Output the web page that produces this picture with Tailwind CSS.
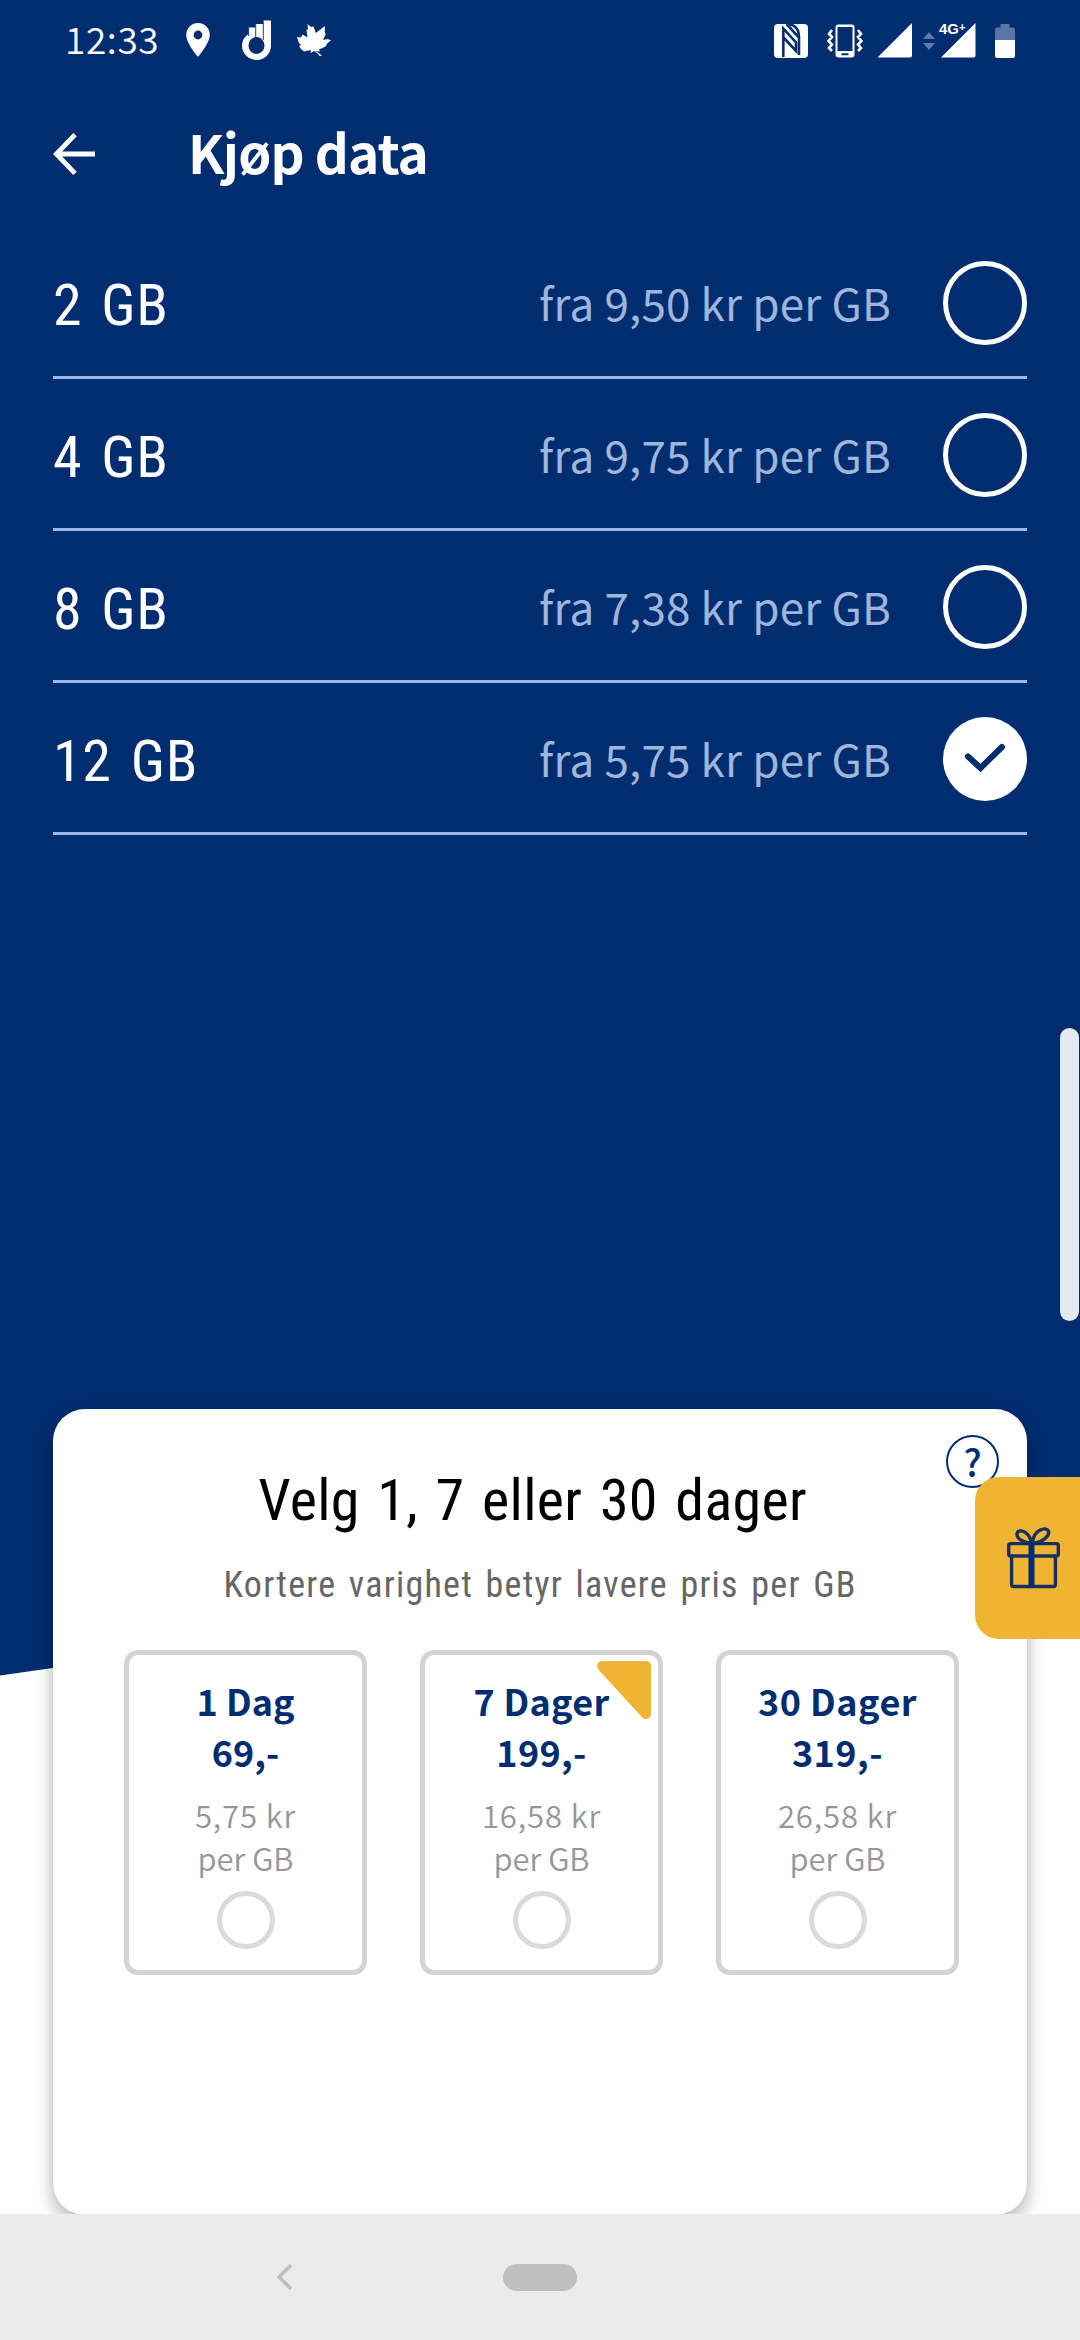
<!DOCTYPE html>
<html lang="nb">
<head>
<meta charset="utf-8">
<meta name="viewport" content="width=device-width, initial-scale=1">
<title>Kjøp data</title>
<script src="https://cdn.jsdelivr.net/npm/@tailwindcss/browser@4"></script>
</head>
<body class="bg-white">
<div class="relative flex flex-col w-[1080px] h-[2340px] overflow-hidden bg-white font-['Noto_Sans_CJK_SC','Noto_Sans',sans-serif]">
  <!-- slanted blue backdrop -->
  <svg class="absolute inset-0" width="1080" height="2340" aria-hidden="true"><path fill="#002d70" d="M0 0H1080V1523L0 1675.500Z"/></svg>

  <!-- status bar -->
  <div class="relative flex items-center h-[76px] pl-[65px] text-white">
    <span class="w-[121px] text-[37px] leading-none font-[350] tracking-[0.6px]">12:33</span>
    <svg width="24" height="34" viewBox="0 0 24 34" class="mt-1"><path fill="#fff" fill-rule="evenodd" d="M12 0A11.800 11.800 0 0 0 .2 11.800C.2 20.500 12 34 12 34S23.800 20.500 23.800 11.800A11.800 11.800 0 0 0 12 0Zm0 7.600a4.400 4.400 0 1 1 0 8.800 4.400 4.400 0 0 1 0-8.800Z"/></svg>
    <svg width="30" height="40" viewBox="0 0 30 40" class="ml-8 mt-1"><path fill="#fff" fill-rule="evenodd" d="M22 .5h7V25a14.500 14.500 0 0 1-29 1c0-5 2-9 6.500-12V7.500h6.800V4H21V1ZM14.500 17a8 8.500 0 1 0 0 17 8 8.500 0 0 0 0-17Z"/><path stroke="#002d70" stroke-width=".9" d="M13.700 4v14M21.300 1v19M6.600 8v8"/></svg>
    <svg width="34" height="32" viewBox="0 0 34 32" class="ml-[25px] mt-1"><path fill="#fff" d="M10.500 0l3.500 3 2.500-.5L19 9l3-2.500L28 2l-.3 6 1 2-2.500 6 4.500-1 3.300 1.500-3.500 2.500-2 3.500-6.500 3 1 2-4.500-.5 4 2.500 2.500 2.500-1.500 1-3-3.500-3-2.500-4 2 .5-3-7 1.500L4 25l-2-3 2-.5L1.500 18 0 13l4 .5 1.500-3 5 3L9.500 6 11 5Z"/></svg>
    <div class="ml-auto flex items-center pr-[65px] mt-[5px]">
      <svg width="34" height="34" viewBox="0 0 34 34"><rect width="34" height="34" rx="4" fill="#fff"/><path fill="none" stroke="#002d70" stroke-width="2.600" d="M9.300 33V4.500L22 18.500V27L9.500 13.500M12.500 0L25 13.500V31M12.500 0C20 .3 25 4 25 13"/></svg>
      <svg width="36" height="34" viewBox="0 0 36 34" class="ml-[19px]"><path fill="none" stroke="#fff" stroke-width="2.600" d="M5 6L2 10l3 3-3.500 4L5 20.500 2 24l3 3M31 6l3 4-3 3 3.500 4-3.500 3.500 3 3.500-3 3"/><path fill="#fff" fill-rule="evenodd" d="M11.500.5h13a3 3 0 0 1 3 3v27a3 3 0 0 1-3 3h-13a3 3 0 0 1-3-3v-27a3 3 0 0 1 3-3ZM10.500 3v24h15V3ZM14.500 29.300v2h7v-2Z"/></svg>
      <svg width="36" height="35" viewBox="0 0 36 35" class="ml-[14px]"><path fill="#fff" d="M35 0V32.500a2 2 0 0 1-2 2H.5Z"/></svg>
      <svg width="12" height="18" viewBox="0 0 12 18" class="ml-[10px] mt-[1px]"><path fill="#5f7cad" d="M6 0l6 7H0ZM6 18l6-7H0Z"/></svg>
      <div class="relative ml-[6px]">
        <svg width="35" height="35" viewBox="0 0 35 35"><path fill="#fff" d="M34.500 0V32.500a2 2 0 0 1-2 2H0Z"/></svg>
        <span class="absolute -left-[2px] -top-[2px] text-[15px] leading-none font-bold whitespace-nowrap font-['Liberation_Sans',sans-serif]">4G<span class="relative -top-[3px] text-[11px]">+</span></span>
      </div>
      <svg width="20" height="34" viewBox="0 0 20 34" class="ml-[19px]"><path fill="#5a76a9" d="M5.500 0h9v3.500H18a2 2 0 0 1 2 2V16.500H0V5.500a2 2 0 0 1 2-2h3.500Z"/><path fill="#fff" d="M0 16h20V32a2 2 0 0 1-2 2H2a2 2 0 0 1-2-2Z"/></svg>
    </div>
  </div>

  <!-- app bar -->
  <header class="relative flex items-center h-[151px] pl-[53px] text-white">
    <svg width="42" height="42" viewBox="0 0 42 42" class="mt-1"><path fill="none" stroke="#fff" stroke-width="4.800" d="M42 21H4M22 1.700L3.400 21 22 40.300"/></svg>
    <h1 class="ml-[93px] text-[53px] leading-none font-bold tracking-[-0.900px]">Kjøp data</h1>
  </header>

  <!-- data packages -->
  <ul class="relative mx-[53px] text-white">
    <li class="flex items-center h-[152px] border-b-[3px] border-[#9fb6e2]">
      <span class="pt-[7px] text-[58px] leading-none tracking-[0.700px] [word-spacing:5px] font-['Roboto_Condensed',sans-serif]">2 GB</span>
      <span class="ml-auto text-[44px] leading-none tracking-[0.150px] text-[#9fb6dc]">fra 9,50 kr per GB</span>
      <span class="ml-[52px] mt-[3px] size-[84px] rounded-full border-[5px] border-white"></span>
    </li>
    <li class="flex items-center h-[152px] border-b-[3px] border-[#9fb6e2]">
      <span class="pt-[7px] text-[58px] leading-none tracking-[0.700px] [word-spacing:5px] font-['Roboto_Condensed',sans-serif]">4 GB</span>
      <span class="ml-auto text-[44px] leading-none tracking-[0.150px] text-[#9fb6dc]">fra 9,75 kr per GB</span>
      <span class="ml-[52px] mt-[3px] size-[84px] rounded-full border-[5px] border-white"></span>
    </li>
    <li class="flex items-center h-[152px] border-b-[3px] border-[#9fb6e2]">
      <span class="pt-[7px] text-[58px] leading-none tracking-[0.700px] [word-spacing:5px] font-['Roboto_Condensed',sans-serif]">8 GB</span>
      <span class="ml-auto text-[44px] leading-none tracking-[0.150px] text-[#9fb6dc]">fra 7,38 kr per GB</span>
      <span class="ml-[52px] mt-[3px] size-[84px] rounded-full border-[5px] border-white"></span>
    </li>
    <li class="flex items-center h-[152px] border-b-[3px] border-[#9fb6e2]">
      <span class="pt-[7px] text-[58px] leading-none tracking-[0.700px] [word-spacing:5px] font-['Roboto_Condensed',sans-serif]">12 GB</span>
      <span class="ml-auto text-[44px] leading-none tracking-[0.150px] text-[#9fb6dc]">fra 5,75 kr per GB</span>
      <span class="ml-[52px] mt-[3px] size-[84px] rounded-full bg-white"><svg width="84" height="84" viewBox="0 0 84 84"><path fill="none" stroke="#002d70" stroke-width="6" stroke-linecap="round" d="M25 39.500L37.500 51 59 30"/></svg></span>
    </li>
  </ul>

  <!-- duration card -->
  <section class="relative mt-[574px] mx-[53px] h-[806px] rounded-[32px] bg-white pt-[61px] shadow-[0_7px_18px_rgba(0,0,0,0.32)]">
    <h2 class="pr-[15px] text-center text-[58px] leading-[60px] text-black tracking-[0.300px] [word-spacing:4px] font-['Roboto_Condensed',sans-serif]">Velg 1, 7 eller 30 dager</h2>
    <p class="mt-[35px] text-center text-[36px] leading-[40px] text-[#666] tracking-[1.250px] [word-spacing:3px] font-['Roboto_Condensed',sans-serif]">Kortere varighet betyr lavere pris per GB</p>
    <div class="mt-[45px] ml-[71px] flex gap-[53px] text-center">
      <div class="relative flex flex-col items-center w-[243px] h-[325px] pt-5 rounded-[14px] border-[5px] border-[#d3d3d3]">
        <p class="text-[36px] leading-[51px] font-bold text-[#002d70]">1 Dag<br>69,-</p>
        <p class="mt-4 text-[31px] leading-[43px] font-[350] text-[#969696]"><span class="tracking-[0.900px]">5,75 kr</span><br>per GB</p>
        <span class="mt-3 size-[58px] rounded-full border-[5px] border-[#dadada]"></span>
      </div>
      <div class="relative flex flex-col items-center w-[243px] h-[325px] pt-5 rounded-[14px] border-[5px] border-[#d3d3d3]">
        <svg class="absolute right-[7px] top-[6px]" width="54" height="58" viewBox="0 0 54 58"><path fill="#f0b434" stroke="#f0b434" stroke-width="10" stroke-linejoin="round" d="M5 5H49V53Z"/></svg>
        <p class="relative text-[36px] leading-[51px] font-bold text-[#002d70] tracking-[0.300px]">7 Dager<br>199,-</p>
        <p class="mt-4 text-[31px] leading-[43px] font-[350] text-[#969696]"><span class="tracking-[0.900px]">16,58 kr</span><br>per GB</p>
        <span class="mt-3 size-[58px] rounded-full border-[5px] border-[#dadada]"></span>
      </div>
      <div class="relative flex flex-col items-center w-[243px] h-[325px] pt-5 rounded-[14px] border-[5px] border-[#d3d3d3]">
        <p class="text-[36px] leading-[51px] font-bold text-[#002d70] tracking-[0.500px]">30 Dager<br>319,-</p>
        <p class="mt-4 text-[31px] leading-[43px] font-[350] text-[#969696]"><span class="tracking-[0.900px]">26,58 kr</span><br>per GB</p>
        <span class="mt-3 size-[58px] rounded-full border-[5px] border-[#dadada]"></span>
      </div>
    </div>
    <button class="absolute right-[28px] top-[26px] flex items-center justify-center size-[53px] rounded-full border-[2.500px] border-[#002d70] text-[#002d70] text-[37px] leading-none font-medium">?</button>
  </section>

  <!-- gift tab -->
  <button class="absolute right-0 top-[1477px] flex items-center w-[105px] h-[162px] pl-[32px] rounded-l-[24px] bg-[#f0b434]">
    <svg width="53" height="62" viewBox="0 0 53 62"><g fill="none" stroke="#17305f" stroke-width="3.400" stroke-linejoin="round"><rect x="1.700" y="16.600" width="49.600" height="12.400" rx="2"/><path d="M4.600 29V57.500a2 2 0 0 0 2 2H46.400a2 2 0 0 0 2-2V29M24.500 16C17 16 9 11.500 10 6.500 11.500 1 22.500 4 24.500 16ZM25.500 16C34 16 43 9.500 41.500 4 39 -1 26 3 25.500 16Z"/><path stroke="#002d70" stroke-width="6" d="M24.500 16V60"/></g></svg>
  </button>

  <!-- scroll handle -->
  <div class="absolute right-[1px] top-[1028px] w-[19px] h-[293px] rounded-full bg-[#e5eaf0]"></div>

  <!-- navigation bar -->
  <nav class="relative mt-[-1px] flex items-center h-[126px] pl-[276px] bg-[#ebebeb]">
    <svg width="16" height="26" viewBox="0 0 16 26"><path fill="none" stroke="#bdbdbd" stroke-width="3.500" d="M15 1.200L3 13 15 24.800"/></svg>
    <div class="ml-[211px] w-[74px] h-[27px] rounded-full bg-[#bfbfbf]"></div>
  </nav>
</div>
</body>
</html>
